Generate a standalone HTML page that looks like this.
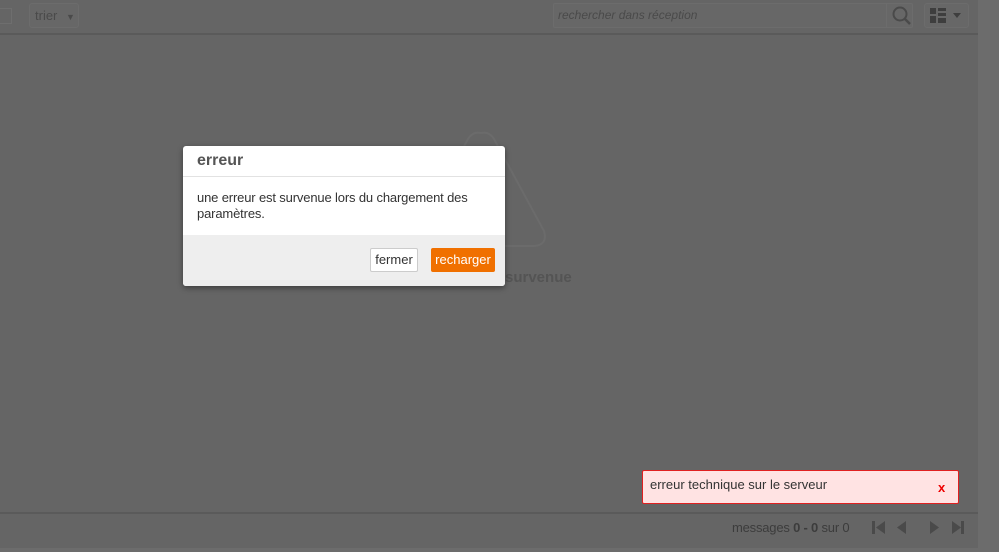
<!DOCTYPE html>
<html><head><meta charset="utf-8"><style>
*{margin:0;padding:0;box-sizing:border-box}
body{width:999px;height:552px;background:#656565;font-family:"Liberation Sans",Arial,sans-serif;position:relative;overflow:hidden}
.a{position:absolute}
</style></head><body>
<div class="a" style="left:978px;top:0;width:21px;height:552px;background:#6c6c6c"></div>
<div class="a" style="left:0;top:548px;width:999px;height:4px;background:#6c6c6c"></div>
<div class="a" style="left:0;top:8px;width:12px;height:16px;border:1px solid #6e6e6e;border-left:none"></div>
<div class="a" style="left:29px;top:3px;width:50px;height:25px;border:1px solid #6c6c6c;border-radius:3px;background:#676767;color:#4a4a4a;font-size:13px;line-height:23px;padding-left:5px">trier <span style="font-size:9px;margin-left:5px">▼</span></div>
<div class="a" style="left:553px;top:3px;width:360px;height:25px;border:1px solid #6c6c6c;border-radius:2px;background:#676767;color:#4a4a4a;font-size:12px;font-style:italic;line-height:23px;padding-left:4px">rechercher dans réception</div>
<div class="a" style="left:886px;top:3px;width:1px;height:25px;background:#6c6c6c"></div>
<svg class="a" style="left:891px;top:6px" width="22" height="20"><circle cx="9" cy="8" r="6.5" fill="none" stroke="#4a4a4a" stroke-width="2"/><line x1="13.5" y1="12.5" x2="19" y2="18" stroke="#4a4a4a" stroke-width="2.5"/></svg>
<div class="a" style="left:924px;top:3px;width:45px;height:25px;border:1px solid #6c6c6c;border-radius:3px;background:#676767"></div>
<svg class="a" style="left:930px;top:8px" width="36" height="16"><rect x="0" y="0" width="6" height="6" fill="#3e3e3e"/><rect x="0" y="8" width="6" height="7" fill="#3e3e3e"/><rect x="8" y="0" width="8" height="3" fill="#3e3e3e"/><rect x="8" y="5" width="8" height="3" fill="#3e3e3e"/><rect x="8" y="10" width="8" height="5" fill="#3e3e3e"/><path d="M23 5h8l-4 5z" fill="#3e3e3e"/></svg>
<div class="a" style="left:0;top:33px;width:978px;height:2px;background:#5a5a5a"></div>
<svg class="a" style="left:400px;top:125px" width="160" height="130"><path d="M81 8 Q73 6 68 14 L18 106 Q14 120 28 121 L134 121 Q148 120 144 106 L94 14 Q89 6 81 8Z" fill="none" stroke="#6b6b6b" stroke-width="2"/></svg>
<div class="a" style="left:505px;top:269px;color:#545454;font-size:15px;font-weight:bold">survenue</div>
<div class="a" style="left:183px;top:146px;width:322px;height:140px;background:#fff;border-radius:3px;box-shadow:0 2px 6px rgba(0,0,0,.4);overflow:hidden">
<div style="height:31px;border-bottom:1px solid #e2e2e2;padding-left:14px;font-size:16px;font-weight:bold;color:#555;line-height:30px">erreur</div>
<div style="padding:13px 14px 0;font-size:13px;color:#333;line-height:16px;height:58px;letter-spacing:-0.15px">une erreur est survenue lors du chargement des paramètres.</div>
<div style="background:#eeeeee;height:51px;position:relative">
<div class="a" style="left:187px;top:13px;width:48px;height:24px;background:#fff;border:1px solid #ccc;border-radius:2px;font-size:13px;color:#333;line-height:22px;text-align:center">fermer</div>
<div class="a" style="left:248px;top:13px;width:64px;height:24px;background:#f07000;border-radius:2px;font-size:13px;color:#fff;line-height:24px;text-align:center">recharger</div>
</div></div>
<div class="a" style="left:642px;top:470px;width:317px;height:34px;background:#ffe3e3;border:1px solid #e02020;border-radius:2px;font-size:13px;color:#333;line-height:28px;padding-left:7px">erreur technique sur le serveur<span style="position:absolute;left:295px;top:3px;color:#e00;font-weight:bold;font-size:13px">x</span></div>
<div class="a" style="left:0;top:512px;width:978px;height:2px;background:#5a5a5a"></div>
<div class="a" style="left:732px;top:520px;font-size:13px;color:#3c3c3c;letter-spacing:-0.2px">messages <b>0 - 0</b> sur 0</div>
<svg class="a" style="left:870px;top:520px" width="100" height="16"><rect x="2" y="1" width="3" height="13" fill="#4a4a4a"/><path d="M15 1v13l-9-6.5z" fill="#4a4a4a"/><path d="M36 1v13l-9-6.5z" fill="#4a4a4a"/><path d="M60 1v13l9-6.5z" fill="#4a4a4a"/><path d="M82 1v13l9-6.5z" fill="#4a4a4a"/><rect x="91" y="1" width="3" height="13" fill="#4a4a4a"/></svg>
</body></html>
